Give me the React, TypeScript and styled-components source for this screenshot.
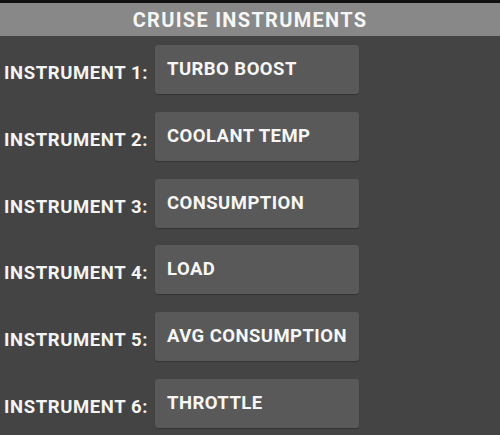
import React from 'react';
import styled, { createGlobalStyle } from 'styled-components';

const GlobalStyle = createGlobalStyle`
  html, body {
    margin: 0;
    padding: 0;
    background: #444444;
  }
  body {
    font-family: Roboto, "Liberation Sans", sans-serif;
  }
`;

const Screen = styled.div`
  width: 500px;
  height: 435px;
  overflow: hidden;
  background: #444444;
  border-top: 3px solid #111111;
  box-sizing: border-box;
`;

const Header = styled.div`
  height: 33px;
  background: #888888;
  color: #f6f6f6;
  font-size: 20px;
  font-weight: 700;
  display: flex;
  align-items: center;
  justify-content: center;
  letter-spacing: 1.3px;
`;

const List = styled.div`
  display: flex;
  flex-direction: column;
  gap: 17.8px;
  padding-top: 9px;
`;

const Row = styled.div`
  display: flex;
  align-items: center;
  height: 49px;
`;

const Label = styled.span`
  width: 155px;
  padding-left: 4px;
  padding-top: 7px;
  box-sizing: border-box;
  color: #f4f4f4;
  font-size: 18.5px;
  font-weight: 700;
  letter-spacing: 0.6px;
  white-space: nowrap;
`;

const Field = styled.div`
  width: 204px;
  height: 49px;
  box-sizing: border-box;
  background: #595959;
  border-radius: 3px;
  box-shadow: 0 1px 1px rgba(0, 0, 0, 0.25);
  display: flex;
  align-items: center;
  padding-left: 12px;
  padding-bottom: 1px;
  color: #f6f6f6;
  font-size: 18.5px;
  font-weight: 700;
  letter-spacing: 0.45px;
  white-space: nowrap;
`;

const instruments = ['TURBO BOOST', 'COOLANT TEMP', 'CONSUMPTION', 'LOAD', 'AVG CONSUMPTION', 'THROTTLE'];

function App() {
  return (
    <Screen>
      <GlobalStyle />
      <Header>CRUISE INSTRUMENTS</Header>
      <List>
        {instruments.map((name, i) => (
          <Row key={name}>
            <Label>INSTRUMENT {i + 1}:</Label>
            <Field>{name}</Field>
          </Row>
        ))}
      </List>
    </Screen>
  );
}

export default App;
